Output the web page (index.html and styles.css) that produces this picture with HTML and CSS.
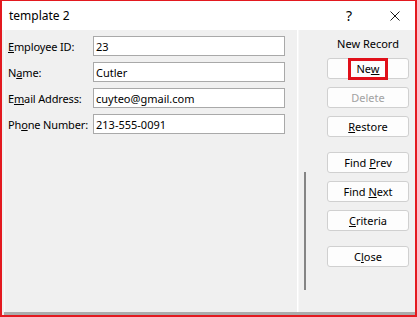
FILE: index.html
```html
<!DOCTYPE html>
<html lang="en">
<head>
    <meta charset="UTF-8">
    <meta name="viewport" content="width=device-width, initial-scale=1.0">
    <title>template 2</title>
    <link rel="stylesheet" href="styles.css">
</head>
<body>

<div class="window">
    <div class="titlebar">
        <span class="title">template 2</span>
        <span class="help">?</span>
        <span class="close-icon">
            <svg width="10" height="10" viewBox="0 0 10 10">
                <path d="M0.5 0.5 L9.5 9.5 M9.5 0.5 L0.5 9.5" stroke="#1a1a1a" stroke-width="1" fill="none"/>
            </svg>
        </span>
    </div>

    <div class="dialog">
        <!-- record fields -->
        <div class="fields">
            <label for="empId"><u>E</u>mployee ID:</label>
            <input type="text" id="empId" value="23">
            <label for="empName">N<u>a</u>me:</label>
            <input type="text" id="empName" value="Cutler">
            <label for="empEmail">E<u>m</u>ail Address:</label>
            <input type="text" id="empEmail" value="cuyteo@gmail.com">
            <label for="empPhone">Ph<u>o</u>ne Number:</label>
            <input type="text" id="empPhone" value="213-555-0091">
        </div>

        <div class="track">
            <div class="thumb"></div>
        </div>

        <!-- record actions -->
        <div class="actions">
            <div class="record-label">New Record</div>
            <button class="btn"><span class="focus-box">Ne<u>w</u></span></button>
            <button class="btn" disabled>Delete</button>
            <button class="btn"><u>R</u>estore</button>
            <button class="btn group">Find <u>P</u>rev</button>
            <button class="btn">Find <u>N</u>ext</button>
            <button class="btn"><u>C</u>riteria</button>
            <button class="btn group">C<u>l</u>ose</button>
        </div>
    </div>
</div>

</body>
</html>
```

FILE: styles.css
```css
body {
    margin: 0;
    padding: 0;
    font-family: 'Noto Sans', 'Open Sans', sans-serif;
    font-size: 11px;
    color: #000;
}
.window {
    width: 417px;
    height: 317px;
    box-sizing: border-box;
    border: 2px solid #e3191f;
    border-top-width: 1px;
    background-color: #f0f0f0;
    display: flex;
    flex-direction: column;
}
.titlebar {
    height: 29px;
    background-color: #ffffff;
    display: flex;
    align-items: center;
    padding-left: 7px;
    flex-shrink: 0;
}
.title {
    font-size: 12px;
    flex: 1;
}
.help {
    font-size: 14px;
    width: 40px;
    margin-right: 4px;
}
.close-icon {
    width: 25px;
    display: flex;
    padding-top: 1px;
}
.dialog {
    flex: 1;
    display: flex;
    margin-left: 2px;
    border-bottom: 3px solid #ababab;
}
.fields {
    width: 289px;
    border-left: 1px solid #fafafa;
    border-right: 1px solid #ffffff;
    padding: 6px 0 0 3px;
    display: grid;
    grid-template-columns: 85px 192px;
    grid-auto-rows: 20px;
    row-gap: 6px;
    align-content: start;
}
.fields label {
    display: flex;
    align-items: center;
    letter-spacing: -0.15px;
}
.fields input {
    box-sizing: border-box;
    height: 20px;
    margin: 0;
    border: 1px solid #a9a9a9;
    background-color: #ffffff;
    padding: 0 2px;
    font-family: inherit;
    font-size: 11px;
    color: #000;
    outline: none;
}
.track {
    width: 28px;
    border-left: 1px solid #f7f7f7;
    display: flex;
}
.thumb {
    width: 2px;
    height: 118px;
    margin: 142px 0 0 5px;
    background-color: #858585;
}
.actions {
    display: flex;
    flex-direction: column;
    padding-top: 6px;
}
.record-label {
    width: 82px;
    line-height: 16px;
    text-align: center;
    margin-bottom: 6px;
}
.btn {
    width: 82px;
    height: 21px;
    box-sizing: border-box;
    margin: 0 0 8px 0;
    padding: 0;
    border: 1px solid #d0d0d0;
    border-radius: 3px;
    background-color: #fdfdfd;
    font-family: inherit;
    font-size: 11px;
    line-height: 19px;
    color: #000;
    text-align: center;
}
.btn:disabled {
    color: #a2a2a2;
}
.btn.group {
    margin-top: 7px;
}
.focus-box {
    display: inline-block;
    vertical-align: top;
    height: 22px;
    margin-top: -1px;
    box-sizing: border-box;
    border: 3px solid #e0101a;
    padding: 0 5px;
    line-height: 16px;
}
```
